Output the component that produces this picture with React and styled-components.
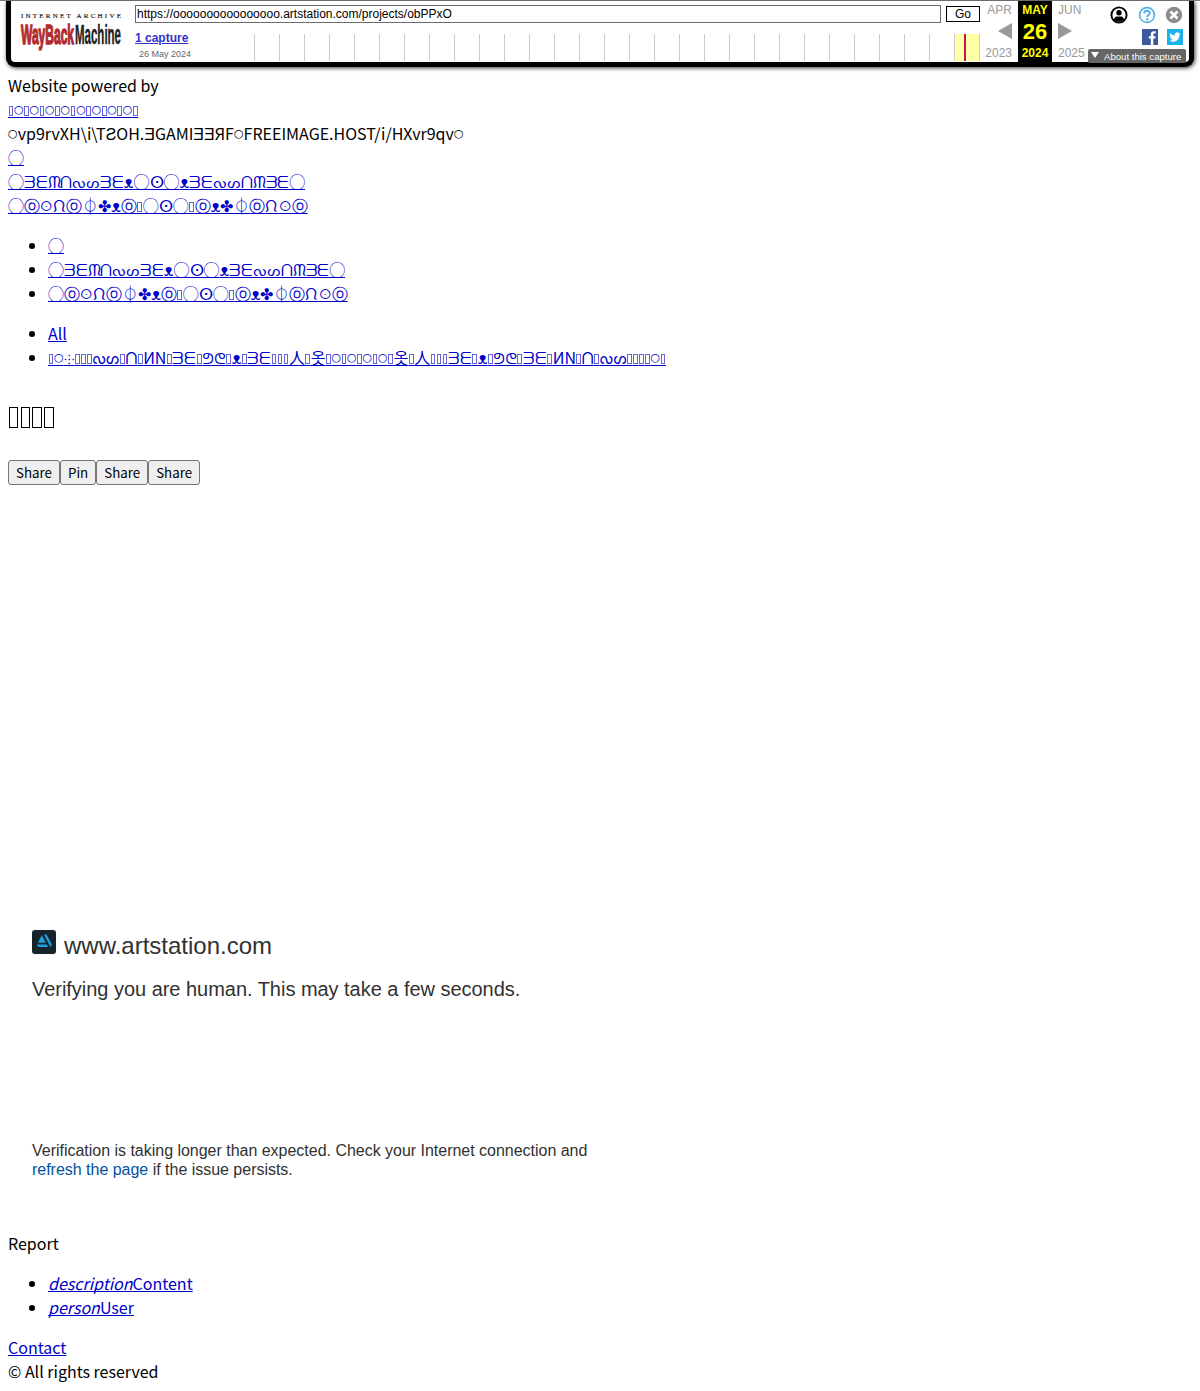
import React from "react";
import styled, { createGlobalStyle, css } from "styled-components";

const GlobalStyle = createGlobalStyle`
  body {
    margin: 0;
    background: #fff;
    color: #000;
    font: 16px/24px "Noto Sans CJK JP", sans-serif;
  }
`;

const arial = css`font-family: "Liberation Sans", Arial, sans-serif;`;

/* ---------- archive toolbar ---------- */

const ToolbarWrap = styled.header`
  box-sizing: border-box;
  height: 73px;
  padding: 0 6px;
  border-top: 1px solid #808080;
  ${arial}
`;

const Toolbar = styled.div`
  box-sizing: border-box;
  height: 66px;
  display: flex;
  border: 5px solid #000;
  border-top: 0;
  border-radius: 0 0 9px 9px;
  background: #fff;
  box-shadow: 1px 1px 4px #333;
`;

const Logo = styled.svg`
  display: block;
  flex: none;
  width: 104px;
  height: 44px;
  margin: 8px 12px 0 8px;
  overflow: visible;
`;

const Center = styled.div`
  width: 845px;
  flex: none;
`;

const AddressRow = styled.div`
  display: flex;
  gap: 5px;
  padding-top: 4px;
`;

const Address = styled.div`
  box-sizing: border-box;
  width: 806px;
  height: 18px;
  padding-left: 1px;
  border: 1px solid #6c6c6c;
  font-size: 12px;
  line-height: 16px;
`;

const Go = styled.div`
  box-sizing: border-box;
  width: 34px;
  height: 16px;
  margin-top: 1px;
  border: 1px solid #000;
  font-size: 12px;
  line-height: 14px;
  text-align: center;
`;

const CaptureRow = styled.div`
  display: flex;
  margin-top: 11px;
`;

const Captures = styled.div`
  width: 119px;
`;

const CaptureLink = styled.a`
  display: block;
  margin-top: -4px;
  color: #33c;
  font-size: 12px;
  font-weight: bold;
  line-height: 16px;
  text-decoration: underline;
`;

const CaptureDate = styled.div`
  padding-left: 4px;
  margin-top: 2px;
  color: #666;
  font-size: 9px;
  line-height: 12px;
`;

const Timeline = styled.div`
  display: flex;
  height: 27px;
  border-right: 1px solid #ccc;
`;

const Year = styled.div`
  box-sizing: border-box;
  width: 25px;
  display: flex;
  justify-content: center;
  border-left: 1px solid #ccc;
  background: ${(p) => (p.$active ? "#ffffa5" : "transparent")};
`;

const Mark = styled.div`
  width: 2px;
  margin-right: 4px;
  background: #c8105a;
`;

const Months = styled.div`
  width: 102px;
  flex: none;
  display: grid;
  grid-template-columns: 34px 34px 34px;
  margin-left: 4px;
`;

const Month = styled.div`
  box-sizing: border-box;
  height: 61px;
  display: flex;
  flex-direction: column;
  justify-content: space-between;
  align-items: ${(p) => p.$align};
  padding: 2px ${(p) => (p.$current ? 0 : 6)}px 2px;
  background: ${(p) => (p.$current ? "#000" : "none")};
  color: ${(p) => (p.$current ? "#ff0" : "#999")};
  font-size: 12px;
  line-height: 14px;
  font-weight: ${(p) => (p.$current ? "bold" : "normal")};
`;

const Day = styled.span`
  font-size: 22px;
`;

const Arrow = styled.span`
  margin-bottom: 2px;
  border: solid transparent;
  border-width: 8px 0;
  ${(p) => (p.$left ? "border-right: 14px solid #999;" : "border-left: 14px solid #999;")}
`;

const Tools = styled.div`
  flex: 1;
  display: flex;
  flex-direction: column;
  align-items: flex-end;
`;

const IconRow = styled.div`
  display: flex;
  gap: ${(p) => p.$gap}px;
  height: ${(p) => p.$height}px;
  margin-right: 6px;
  margin-top: 5px;
`;

const About = styled.div`
  box-sizing: border-box;
  display: flex;
  align-items: center;
  gap: 5px;
  width: 98px;
  height: 14px;
  margin: 4px 3px 0 0;
  padding: 1px 0 0 3px;
  border-radius: 2px;
  background: #666;
  color: #fff;
  font-size: 9.6px;
  line-height: 14px;
  white-space: nowrap;
`;

const Caret = styled.span`
  border: solid transparent;
  border-width: 6px 4.5px 0;
  border-top-color: #fff;
  margin-bottom: 3px;
`;

/* ---------- page ---------- */

const Page = styled.main`
  padding: 0 8px;
`;

const Line = styled.div`
  height: 24px;
  white-space: nowrap;
`;

const Link = styled.a`
  color: #0000c8;
  text-decoration: underline;
  text-decoration-skip-ink: none;
`;

const List = styled.ul`
  margin: 16px 0;
  padding-left: 40px;
`;

const Item = styled.li`
  height: 24px;
  white-space: nowrap;
`;

/* A hairline box on the baseline, one narrow cell wide. */
const Tofu = styled.span`
  position: relative;
  font-family: "DejaVu Sans", sans-serif;
  font-size: 0.8em;
  line-height: 0;
  letter-spacing: 0.14em;

  &::before {
    content: "";
    position: absolute;
    box-sizing: border-box;
    left: 0.04em;
    bottom: 0.24em;
    width: 0.37em;
    height: 0.8em;
    border: ${(p) => (p.$bold ? "1.3px" : "1px")} solid currentColor;
    opacity: ${(p) => (p.$bold ? 1 : 0.6)};
  }
`;

const Ring = styled.span`
  font-family: "DejaVu Sans", sans-serif;
  font-size: 11.1px;
  line-height: 0;
  vertical-align: 3.5px;
`;

const Sans = styled.span`
  font-family: sans-serif;
  line-height: 0;
`;

const Dots = styled.span`
  font-size: 12.8px;
  line-height: 0;
`;

const Syllable = styled.span`
  font-family: ${(p) => (p.$curl ? '"Noto Sans Canadian Aboriginal", "Euphemia UCAS", ' : "")}"FreeSans", "Noto Sans CJK JP";
  line-height: 0;
`;

const Spaced = styled.span`
  letter-spacing: 1.1px;
`;

const Tight = styled.span`
  letter-spacing: -0.13px;
`;

const Title = styled.h1`
  height: 48px;
  margin: 21px 0 22px;
  font-size: 32px;
  font-weight: 400;
  line-height: 48px;
`;

const Buttons = styled.div`
  display: flex;
  height: 25px;
`;

const Button = styled.button`
  box-sizing: border-box;
  height: 25px;
  margin: 0;
  padding: 1px 7px;
  border: 1px solid #767676;
  border-radius: 3px;
  background: #efefef;
  color: #000;
  font: 13.333px/19px "Noto Sans CJK JP", sans-serif;
`;

const Challenge = styled.section`
  box-sizing: border-box;
  height: 746px;
  padding: 445px 24px 0;
  color: #313131;
  ${arial}
`;

const Site = styled.div`
  display: flex;
  gap: 8px;
  font-size: 24px;
  line-height: 32px;
`;

const Status = styled.p`
  margin: 12px 0 0;
  font-size: 20px;
  line-height: 30px;
  letter-spacing: -0.03px;
`;

const Slow = styled.p`
  margin: 137px 0 0;
  font-size: 16px;
  line-height: 19px;
  letter-spacing: -0.018px;
`;

const Refresh = styled.a`
  color: #0051a0;
`;

const wrappers = { "▯": Tofu, "○": Ring, "ⓞ": Sans, "ᴥ": Sans, "⸭": Dots, "ꖴ": Spaced, "ᙁ": Spaced };

/* Gives each special symbol the cell and font it needs. */
const Glyphs = ({ text, bold }) =>
  text.split(/([▯○ⓞᴥ⸭ꖴᙁ])/u).filter(Boolean).map((part, i) => {
    const Wrapper = wrappers[part];
    if (Wrapper) return <Wrapper key={i} $bold={bold}>{part === "▯" ? "\u00a0" : part}</Wrapper>;
    if (/^[ᔓᔕᑎᕤᕦ]+$/u.test(part)) return <Syllable key={i} $curl={part === "ᕤᕦ"}>{part}</Syllable>;
    if (part.includes("ᙏ")) return <Tight key={i}>{part}</Tight>;
    return <React.Fragment key={i}>{part}</React.Fragment>;
  });

const galleries = ["◯", "◯ᗱᗴᙏᑎᔓᔕᗱᗴᴥ◯ⵙ◯ᴥᗱᗴᔓᔕᑎᙏᗱᗴ◯", "◯ⓞꖴᙁⓞ⏀✤ᴥⓞ▯◯ⵙ◯▯ⓞᴥ✤⏀ⓞᙁꖴⓞ"];
const album =
  "▯○⸭▯▯▯ᔓᔕ▯ᑎ▯ИN▯ᗱᗴ▯ᕤᕦ▯ᴥ▯ᗱᗴ▯▯▯人▯옷▯○▯○▯○▯○▯옷▯人▯▯▯ᗱᗴ▯ᴥ▯ᕤᕦ▯ᗱᗴ▯ИN▯ᑎ▯ᔓᔕ▯▯▯▯○▯";

const ArchiveLogo = () => (
  <Logo viewBox="0 0 104 44">
    <text x="2" y="9" fontFamily="Liberation Serif, serif" fontSize="7" fill="#111" stroke="#111" strokeWidth="0.15" textLength="100">
      INTERNET ARCHIVE
    </text>
    <g transform="translate(2 35) scale(1 2.15)" fontFamily="Liberation Sans, sans-serif" fontWeight="bold" fontSize="13">
      <text textLength="53" lengthAdjust="spacingAndGlyphs" fill="#b2292e" stroke="#b2292e" strokeWidth="0.7">WayBack</text>
      <text x="54" textLength="46" lengthAdjust="spacingAndGlyphs" fill="#222" stroke="#222" strokeWidth="0.2">Machine</text>
    </g>
  </Logo>
);

const UserIcon = () => (
  <svg width="18" height="18" viewBox="0 0 18 18">
    <circle cx="9" cy="9" r="7.6" fill="#fff" stroke="#000" strokeWidth="1.9" />
    <circle cx="9" cy="6.8" r="2.7" />
    <path d="M3.8 13.4c.6-2.5 2.4-3 3.7-3h3c1.3 0 3.1.5 3.7 3A7 7 0 0 1 9 15.8a7 7 0 0 1-5.200-2.400z" />
  </svg>
);

const HelpIcon = () => (
  <svg width="18" height="18" viewBox="0 0 18 18">
    <circle cx="9" cy="9" r="7.4" fill="#fff" stroke="#50b0e8" strokeWidth="1.7" />
    <path d="M6.300 7.200c0-3.400 5.500-3.200 5.500-.2 0 1.900-2.600 2-2.600 4" fill="none" stroke="#50b0e8" strokeWidth="1.9" />
    <circle cx="9.2" cy="13.2" r="1.2" fill="#50b0e8" />
  </svg>
);

const CloseIcon = () => (
  <svg width="18" height="18" viewBox="0 0 18 18">
    <circle cx="9" cy="9" r="8.2" fill="#8c8c8c" />
    <path d="M5.500 5.500l7 7m0-7l-7 7" stroke="#fff" strokeWidth="2.6" />
  </svg>
);

const FacebookIcon = () => (
  <svg width="16" height="16" viewBox="0 0 16 16">
    <path fill="#3b5998" d="M0 0h16v16H0z" />
    <path fill="#fff" d="M8.800 16V9.600H6.800V7.200h2V5.500c0-2 1.200-3.200 3.100-3.200h1.800v2.300h-1.300c-.8 0-1.100.4-1.100 1.100v1.500h2.300l-.3 2.400h-2V16z" />
  </svg>
);

const TwitterIcon = () => (
  <svg width="16" height="16" viewBox="0 0 16 16">
    <path fill="#1db3ea" d="M0 0h16v16H0z" />
    <path fill="#fff" d="M13.600 4.600c-.4.200-.9.300-1.300.4.500-.3.800-.7 1-1.300-.4.300-.9.500-1.500.6a2.300 2.300 0 0 0-4 2.100c-1.900-.1-3.600-1-4.700-2.400-.6 1-.3 2.400.7 3.100-.4 0-.7-.1-1-.3 0 1.100.8 2.100 1.800 2.300-.3.100-.7.100-1 0 .3.900 1.100 1.600 2.100 1.600A4.700 4.700 0 0 1 2.300 11.700c3.700 2.400 10.200.8 10.200-5.900.4-.3.800-.7 1.100-1.200z" />
  </svg>
);

const ArtIcon = () => (
  <svg width="24" height="24" viewBox="0 0 24 24">
    <rect width="24" height="24" rx="3" fill="#16242c" />
    <path fill="#1e9fe0" d="M9.800 5.200l4 7.500H5.900zM4.800 14.400h10l1.300 2.700H6.400zM12 4.500h2.600l5 9.400c.3.600.2 1.200-.1 1.700l-1 1.600z" />
  </svg>
);

export default function App() {
  return (
    <>
      <GlobalStyle />
      <ToolbarWrap>
        <Toolbar>
          <ArchiveLogo />
          <Center>
            <AddressRow>
              <Address>https://oooooooooooooooo.artstation.com/projects/obPPxO</Address>
              <Go>Go</Go>
            </AddressRow>
            <CaptureRow>
              <Captures>
                <CaptureLink>1 capture</CaptureLink>
                <CaptureDate>26 May 2024</CaptureDate>
              </Captures>
              <Timeline>
                {Array.from({ length: 29 }, (_, i) => (
                  <Year key={i} $active={i === 28}>{i === 28 && <Mark />}</Year>
                ))}
              </Timeline>
            </CaptureRow>
          </Center>
          <Months>
            <Month $align="flex-end"><span>APR</span><Arrow $left /><span>2023</span></Month>
            <Month $align="center" $current><span>MAY</span><Day>26</Day><span>2024</span></Month>
            <Month $align="flex-start"><span>JUN</span><Arrow /><span>2025</span></Month>
          </Months>
          <Tools>
            <IconRow $gap={9.5} $height={18}>
              <UserIcon /><HelpIcon /><CloseIcon />
            </IconRow>
            <IconRow $gap={9} $height={16}>
              <FacebookIcon /><TwitterIcon />
            </IconRow>
            <About><Caret />About this capture</About>
          </Tools>
        </Toolbar>
      </ToolbarWrap>

      <Page>
        <Line>Website powered by</Line>
        <Line><Link><Glyphs text="▯○▯○▯○▯○▯○▯○▯○▯○▯" /></Link></Line>
        <Line><Glyphs text={"○vp9rvXH\\i\\TƧOH.ƎGAMIƎƎЯF○FREEIMAGE.HOST/i/HXvr9qv○"} /></Line>
        {galleries.map((g) => <Line key={g}><Link><Glyphs text={g} /></Link></Line>)}
        <List>
          {galleries.map((g) => <Item key={g}><Link><Glyphs text={g} /></Link></Item>)}
        </List>
        <List>
          <Item><Link>All</Link></Item>
          <Item><Link><Glyphs text={album} /></Link></Item>
        </List>
        <Title><Glyphs text="▯▯▯▯" bold /></Title>
        <Buttons>
          <Button>Share</Button><Button>Pin</Button><Button>Share</Button><Button>Share</Button>
        </Buttons>
        <Challenge>
          <Site><ArtIcon />www.artstation.com</Site>
          <Status>Verifying you are human. This may take a few seconds.</Status>
          <Slow>
            Verification is taking longer than expected. Check your Internet connection and
            <br />
            <Refresh>refresh the page</Refresh> if the issue persists.
          </Slow>
        </Challenge>
        <Line>Report</Line>
        <List>
          <Item><Link><i>description</i>Content</Link></Item>
          <Item><Link><i>person</i>User</Link></Item>
        </List>
        <Line><Link>Contact</Link></Line>
        <Line>© All rights reserved</Line>
      </Page>
    </>
  );
}
